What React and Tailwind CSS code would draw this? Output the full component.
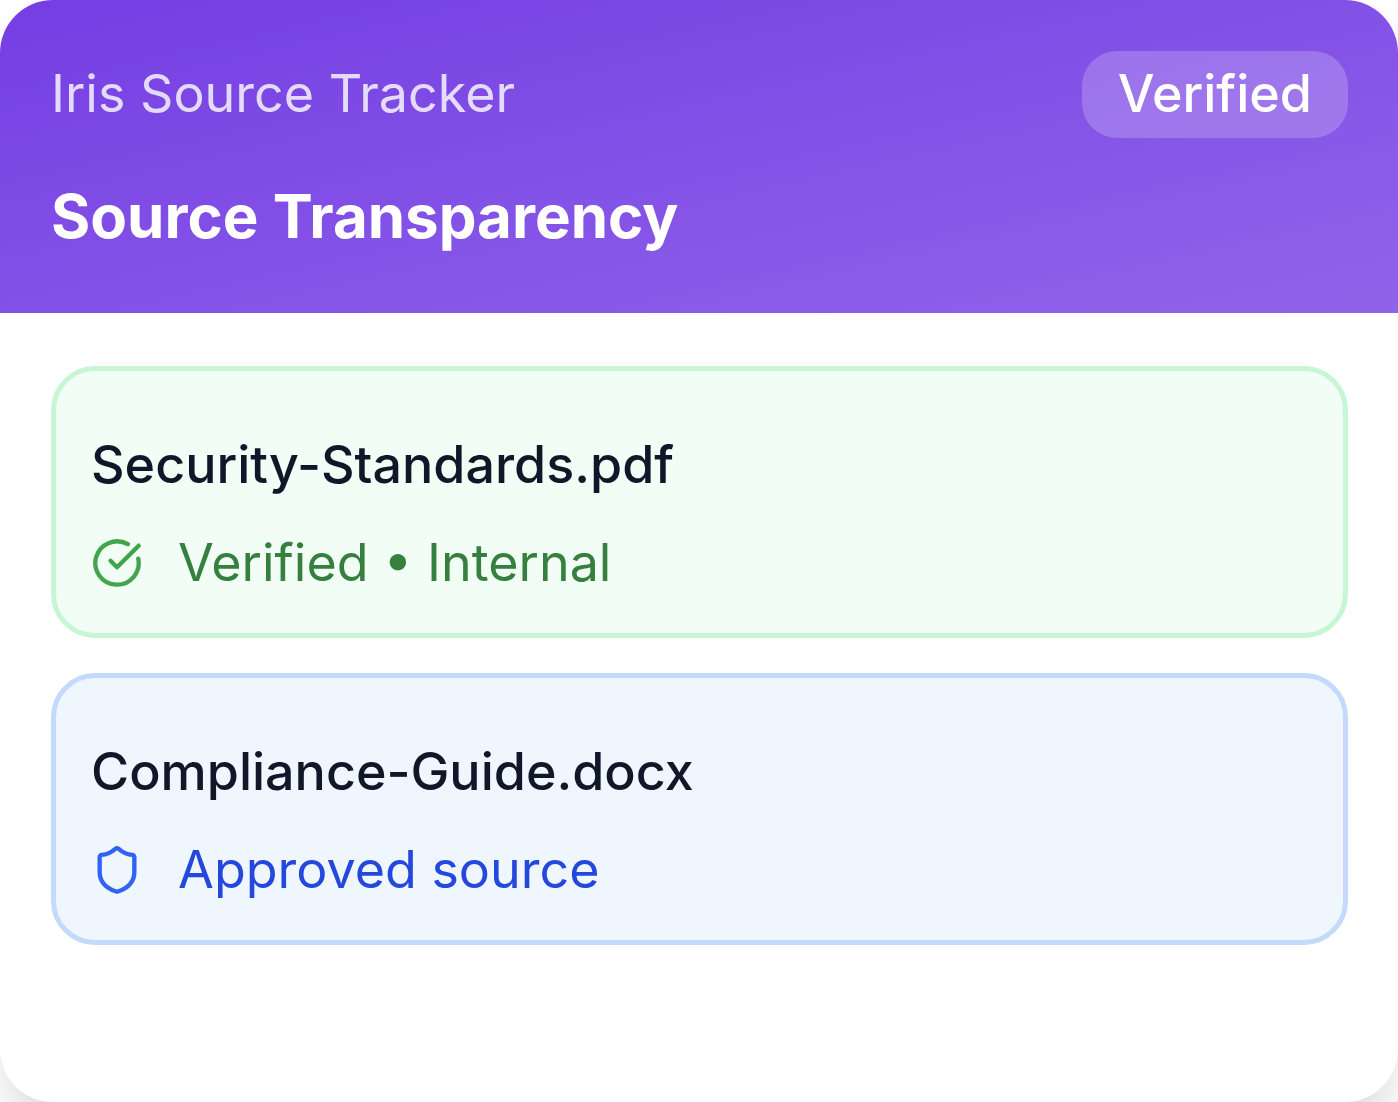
import { CircleCheckBig, Shield } from 'lucide-react';

const sources = [
  {
    name: 'Security-Standards.pdf',
    status: 'Verified • Internal',
    icon: CircleCheckBig,
    card: 'bg-[#f2fdf5] border-[#c6f6d3]',
    iconColor: 'text-[#40a54c]',
    textColor: 'text-[#35803f]',
  },
  {
    name: 'Compliance-Guide.docx',
    status: 'Approved source',
    icon: Shield,
    card: 'bg-[#eff6fe] border-[#c3dafd]',
    iconColor: 'text-[#2f62f5]',
    textColor: 'text-[#2447dc]',
  },
];

function SourceCard({ source }) {
  const Icon = source.icon;

  return (
    <li className={`rounded-[44px] border-[5px] px-[35px] pt-14 pb-8 ${source.card}`}>
      <h3 className="text-[52px] leading-[76px] font-medium text-[#101728]">{source.name}</h3>
      <div className="mt-[22px] flex items-center gap-[35px]">
        <Icon className={`size-[52px] shrink-0 ${source.iconColor}`} aria-hidden="true" />
        <span className={`text-[52px] leading-[76px] ${source.textColor}`}>{source.status}</span>
      </div>
    </li>
  );
}

function App() {
  return (
    <div className="min-h-screen flex bg-white font-['Inter',sans-serif]">
      <main className="flex-1 overflow-hidden rounded-[53px] bg-white shadow-[0_25px_50px_-12px_rgba(0,0,0,0.2)]">
        <header className="bg-linear-to-br from-[#753de3] to-[#9163ea] pl-[51px] pr-[50px] pt-[51px] pb-[53px] text-white">
          <div className="flex items-baseline justify-between">
            <p className="text-[52px] leading-[76px] text-white/80">Iris Source Tracker</p>
            <span className="rounded-[35px] bg-white/20 px-9 pt-[5px] pb-[6px] text-[52px] leading-[76px] font-medium">
              Verified
            </span>
          </div>
          <h2 className="mt-[34px] text-[60px] leading-[88px] font-bold">Source Transparency</h2>
        </header>

        <ul className="space-y-[35px] pl-[51px] pr-[50px] py-[53px]">
          {sources.map((source) => (
            <SourceCard key={source.name} source={source} />
          ))}
        </ul>
      </main>
    </div>
  );
}

export default App;
